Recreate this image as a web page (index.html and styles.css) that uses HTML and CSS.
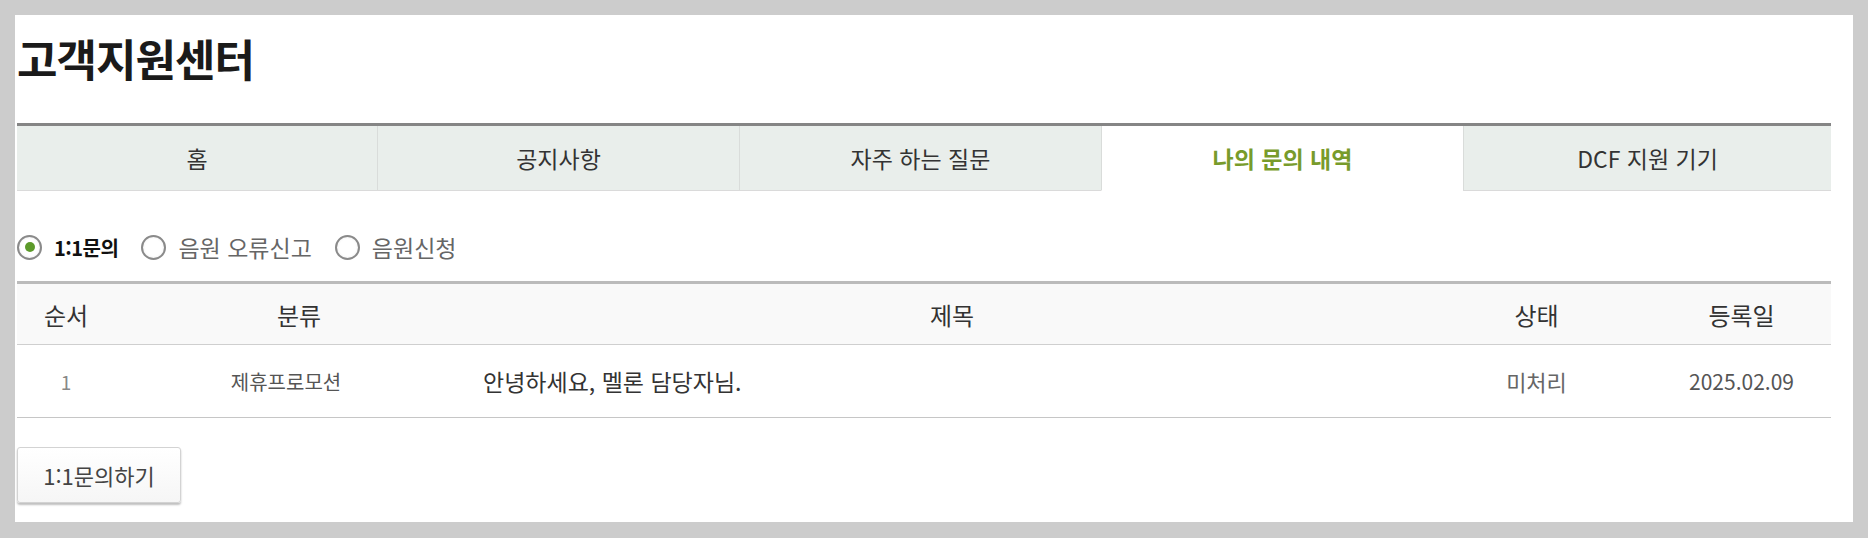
FILE: index.html
```html
<!DOCTYPE html>
<html lang="ko">
<head>
    <meta charset="UTF-8">
    <title>고객지원센터</title>
    <link rel="stylesheet" href="styles.css">
</head>
<body>
    <div class="page">
        <h2 class="page-title">고객지원센터</h2>

        <ul class="tabs">
            <li class="tab">홈</li>
            <li class="tab">공지사항</li>
            <li class="tab">자주 하는 질문</li>
            <li class="tab active">나의 문의 내역</li>
            <li class="tab">DCF 지원 기기</li>
        </ul>

        <div class="filters">
            <label class="option checked"><span class="radio"></span>1:1문의</label>
            <label class="option"><span class="radio"></span>음원 오류신고</label>
            <label class="option"><span class="radio"></span>음원신청</label>
        </div>

        <table class="list">
            <colgroup>
                <col class="c-no">
                <col class="c-cat">
                <col>
                <col class="c-state">
                <col class="c-date">
            </colgroup>
            <thead>
                <tr>
                    <th>순서</th>
                    <th>분류</th>
                    <th>제목</th>
                    <th>상태</th>
                    <th>등록일</th>
                </tr>
            </thead>
            <tbody>
                <tr>
                    <td class="no">1</td>
                    <td class="cat">제휴프로모션</td>
                    <td class="subject">안녕하세요, 멜론 담당자님.</td>
                    <td class="state">미처리</td>
                    <td class="date">2025.02.09</td>
                </tr>
            </tbody>
        </table>

        <button class="btn">1:1문의하기</button>
    </div>
</body>
</html>
```

FILE: styles.css
```css
* { box-sizing: border-box; margin: 0; padding: 0; }
body { background: #cccccc; padding: 15px; font-family: "Noto Sans CJK KR", "Noto Sans", sans-serif; color: #333; }

.page {
    background: #fff;
    padding: 0 22px 19px 2px;
}

.page-title {
    font-size: 44px;
    font-weight: 700;
    line-height: 50px;
    padding-top: 18px;
    margin-bottom: 40px;
    color: #1a1a1a;
    letter-spacing: -1px;
}

.tabs {
    display: flex;
    list-style: none;
    border-top: 3px solid #858585;
}

.tab {
    width: 362px;
    height: 65px;
    display: flex;
    align-items: center;
    justify-content: center;
    background: #e9eeeb;
    border-left: 1px solid #d9dcda;
    border-bottom: 1px solid #dadada;
    font-size: 23px;
    color: #333;
}

.tab:first-child { width: 360px; border-left: none; }
.tab:last-child { flex: 1; }

.tab.active {
    background: #fff;
    border-bottom-color: #fff;
    color: #789b2b;
    font-weight: 700;
}

.filters {
    display: flex;
    align-items: center;
    height: 90px;
    padding-top: 22px;
    gap: 23px;
}

.option {
    display: flex;
    align-items: center;
    gap: 12px;
    font-size: 23px;
    color: #666;
}

.option.checked { color: #111; font-weight: 700; font-size: 20px; letter-spacing: -0.5px; }

.radio {
    width: 25px;
    height: 25px;
    border-radius: 50%;
    border: 2px solid #8a8a8a;
    background: radial-gradient(circle, #fff 55%, #e6e6e6 100%);
    display: flex;
    align-items: center;
    justify-content: center;
}

.checked .radio::after {
    content: "";
    width: 10px;
    height: 10px;
    border-radius: 50%;
    background: #5c9a2a;
}

.list {
    width: 100%;
    border-collapse: collapse;
    table-layout: fixed;
    border-top: 3px solid #bbbbbb;
}

.c-no { width: 98px; }
.c-cat { width: 368px; }
.c-state { width: 231px; }
.c-date { width: 179px; }

.list th {
    height: 62px;
    background: #f9f9f9;
    border-bottom: 1px solid #cfcfcf;
    font-size: 24px;
    font-weight: 400;
    color: #333;
}

.list td {
    height: 73px;
    border-bottom: 1px solid #c6c6c6;
    text-align: center;
    font-size: 21px;
    color: #555;
}

.list .no { font-size: 19px; color: #888; }
.list .cat { font-size: 20px; padding-right: 26px; }
.list .subject { text-align: left; font-size: 23px; color: #333; }
.list .state { font-size: 22px; color: #666; }

.btn {
    margin-top: 29px;
    width: 164px;
    height: 56px;
    font-family: inherit;
    font-size: 22px;
    color: #444;
    background: linear-gradient(#fff, #f6f6f6);
    border: 1px solid #d3d3d3;
    border-radius: 3px;
    box-shadow: 0 2px 2px rgba(0, 0, 0, 0.25);
}
```
